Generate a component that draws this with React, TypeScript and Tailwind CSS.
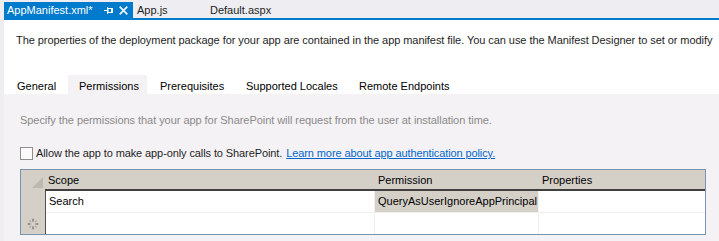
import React from "react";

function NewRowIcon() {
  const lines = [] as React.ReactElement[];
  for (let i = 0; i < 8; i++) {
    const a = (i * Math.PI) / 4;
    const x1 = 6 + Math.cos(a) * 2.5;
    const y1 = 6 + Math.sin(a) * 2.5;
    const x2 = 6 + Math.cos(a) * 5.2;
    const y2 = 6 + Math.sin(a) * 5.2;
    lines.push(
      <line key={i} x1={x1} y1={y1} x2={x2} y2={y2} stroke={i % 2 ? "#b0b0b0" : "#707070"} strokeWidth="1.3" />
    );
  }
  return (
    <svg width="12" height="12" viewBox="0 0 12 12">
      {lines}
    </svg>
  );
}

export default function App() {
  const lib = { fontFamily: '"Liberation Sans", Arial, sans-serif' };
  return (
    <div className="w-[719px] h-[241px] overflow-hidden bg-[#eeeef2] flex flex-col" style={lib}>
      {/* document tabs */}
      <div className="h-[18px] flex items-end pl-[4px] text-[11px] leading-none">
        <div className="h-[16px] w-[129px] bg-[#007acc] text-white flex items-center pl-[3px] pt-[1px]">
          <span>AppManifest.xml*</span>
          <svg className="ml-[11px]" width="9" height="7" viewBox="0 0 9 7">
            <path d="M0 3.5H3.5M3.5 0V7" stroke="white" strokeWidth="1" fill="none" />
            <rect x="4" y="1.5" width="4.5" height="4" stroke="white" strokeWidth="1" fill="none" />
            <path d="M7.5 1.5V5.5" stroke="white" strokeWidth="1" />
          </svg>
          <svg className="ml-[6px]" width="9" height="9" viewBox="0 0 9 9">
            <path d="M0.7 0.7L8.3 8.3M8.3 0.7L0.7 8.3" stroke="#e8f2fa" strokeWidth="1.8" />
          </svg>
        </div>
        <div className="h-[16px] flex items-center pl-[4px] pt-[1px] w-[77px] text-[#1e1e1e]">App.js</div>
        <div className="h-[16px] flex items-center pt-[1px] text-[#1e1e1e]">Default.aspx</div>
      </div>
      <div className="h-[2px] bg-[#007acc] ml-[4px]" />
      <div className="ml-[4px] flex-1 flex flex-col bg-white">
        <div className="pl-[12px] pt-[13px] h-[55px] text-[11px] tracking-[-0.06px] text-[#1e1e1e] whitespace-nowrap leading-[14px]">
          The properties of the deployment package for your app are contained in the app manifest file. You can use the Manifest Designer to set or modify
        </div>
        <div className="flex h-[19px] text-[11px] text-black leading-none whitespace-nowrap">
          <div className="pl-[13px] w-[64px] h-full flex items-center pt-[3px]">General</div>
          <div className="w-[79px] h-full flex items-center pt-[3px] pl-[11px] bg-[#f5f2f5]">Permissions</div>
          <div className="w-[86px] h-full flex items-center pt-[3px] pl-[13px]">Prerequisites</div>
          <div className="w-[113px] h-full flex items-center pt-[3px] pl-[13px]">Supported Locales</div>
          <div className="h-full flex items-center pt-[3px] pl-[13px]">Remote Endpoints</div>
        </div>
        <div className="flex-1 bg-[#f5f2f5] flex flex-col">
          <div className="pl-[16px] pt-[21px] text-[11px] tracking-[-0.05px] text-[#8a8a8a] leading-none whitespace-nowrap">
            Specify the permissions that your app for SharePoint will request from the user at installation time.
          </div>
          <div className="flex items-center pl-[16px] mt-[21px] h-[13px] text-[11px] tracking-[-0.1px] text-[#1e1e1e] whitespace-nowrap">
            <div className="w-[13px] h-[13px] border border-[#8e8f8f] bg-[#fbfbfb] shrink-0" />
            <span className="ml-[3px]">Allow the app to make app-only calls to SharePoint.</span>
            <span className="ml-[4px] text-[#0066cc] underline">Learn more about app authentication policy.</span>
          </div>
          <div className="ml-[16px] mt-[9px] w-[686px] h-[66px] border border-[#7a94b0] bg-white flex text-[11px] text-black leading-none">
            {/* row header column */}
            <div className="w-[24px] bg-[#d4d0c8] flex flex-col">
              <div className="h-[21px] relative">
                <svg className="absolute left-[11px] top-[7px]" width="11" height="11" viewBox="0 0 11 11">
                  <path d="M11 0V11H0Z" fill="#bcb8b0" />
                </svg>
              </div>
              <div className="h-[22px]" />
              <div className="flex-1 flex items-center justify-center pr-[1px]">
                <NewRowIcon />
              </div>
            </div>
            <div className="flex-1 flex flex-col">
              <div className="h-[21px] bg-[#d4d0c8] flex border-b-2 border-[#404040]">
                <div className="w-[330px] pl-[3px] pt-[2px] flex items-center">Scope</div>
                <div className="w-[164px] pl-[3px] pt-[2px] flex items-center">Permission</div>
                <div className="flex-1 pl-[3px] pt-[2px] flex items-center">Properties</div>
              </div>
              <div className="flex-1 flex flex-col border-l border-[#505050]">
                <div className="h-[22px] flex border-b border-[#f0f0f0]">
                  <div className="w-[329px] pl-[3px] flex items-center border-r border-[#f0f0f0]">Search</div>
                  <div className="w-[164px] pl-[3px] flex items-center bg-[#d4d0c8] border-r border-[#f0f0f0] whitespace-nowrap">QueryAsUserIgnoreAppPrincipal</div>
                  <div className="flex-1" />
                </div>
                <div className="flex-1 flex">
                  <div className="w-[329px] border-r border-[#f0f0f0]" />
                  <div className="w-[164px] border-r border-[#f0f0f0]" />
                  <div className="flex-1" />
                </div>
              </div>
            </div>
          </div>
        </div>
      </div>
    </div>
  );
}
